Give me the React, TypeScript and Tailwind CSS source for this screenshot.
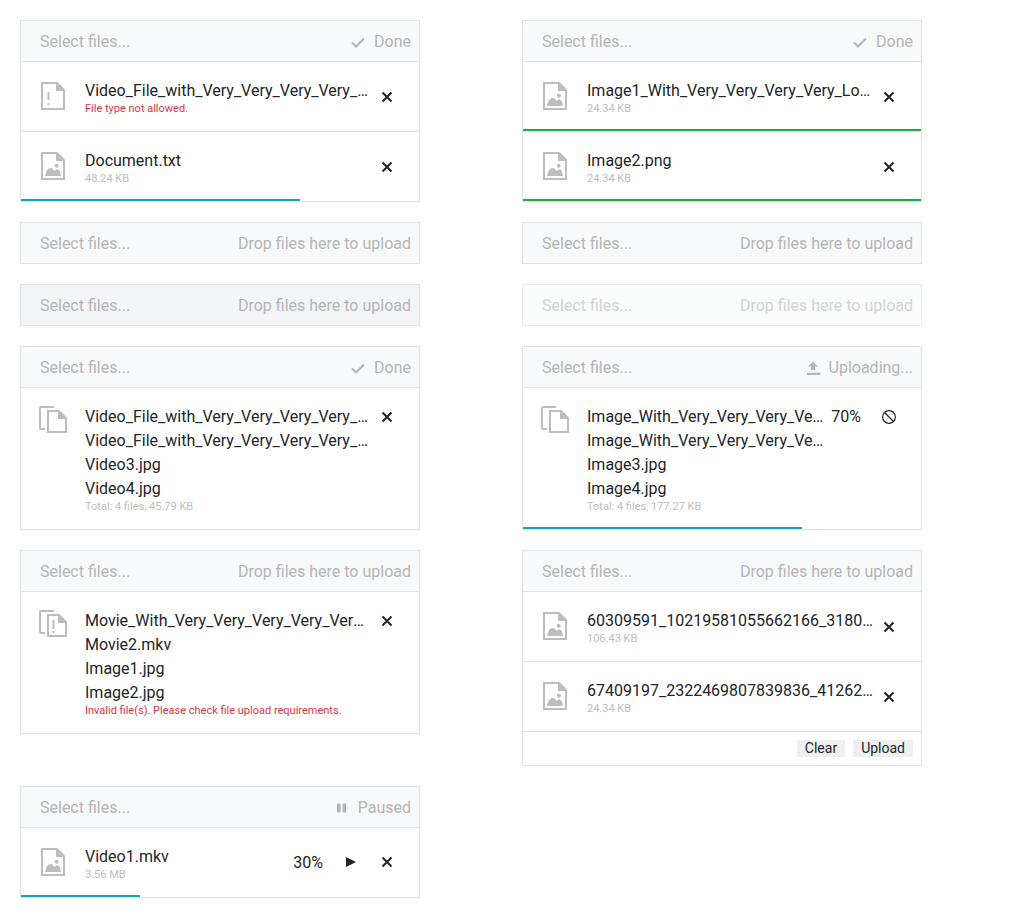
import React from 'react';

type Kind = 'blank' | 'warn' | 'image' | 'copy' | 'copyWarn';

const FileIcon = ({ kind }: { kind: Kind }) => {
  if (kind === 'copy' || kind === 'copyWarn') {
    return (
      <svg width="32" height="32" viewBox="0 0 32 32" className="shrink-0 text-[#bdbdbd]" fill="none" stroke="currentColor" strokeWidth="2">
        <path d="M17 3H4a1 1 0 0 0-1 1v20a1 1 0 0 0 1 1h4" />
        <path d="M11 7h11l7 7v14H11z" />
        <path d="M21 6l9 9h-9z" fill="currentColor" stroke="none" />
        {kind === 'copyWarn' && <path d="M16.500 12v9M16.500 23v2" />}
      </svg>
    );
  }
  return (
    <svg width="32" height="32" viewBox="0 0 32 32" className="shrink-0 text-[#bdbdbd]" fill="none" stroke="currentColor" strokeWidth="2">
      <path d="M5 2h15l7 7v19H5z" />
      <path d="M19 1l9 9h-9z" fill="currentColor" stroke="none" />
      {kind === 'warn' && <path d="M11.500 11v8M11.500 22v2" />}
      {kind === 'image' && (
        <g fill="currentColor" stroke="none">
          <circle cx="19.700" cy="14.700" r="2" />
          <path d="M8 25c1-5 3-8 5.500-8 2 0 3 1.500 4 3 .8-1 1.700-1.500 3-1.500 2 0 3 2.500 3.500 6.500z" />
        </g>
      )}
    </svg>
  );
};

const CheckIcon = () => (
  <svg width="16" height="16" viewBox="0 0 16 16" fill="none" stroke="currentColor" strokeWidth="2"><path d="M2 8.500l4 4L14 4.500" /></svg>
);
const UploadIcon = () => (
  <svg width="16" height="16" viewBox="0 0 16 16" fill="currentColor"><path d="M6 10h4V6.500h3L8 1.700 3 6.500h3zM2 12.700h13.300V15H2z" /></svg>
);
const PauseIcon = () => (
  <svg width="16" height="16" viewBox="0 0 16 16" fill="currentColor"><path d="M3 3.500h3.500v9H3zM8.500 3.500H12v9H8.500z" /></svg>
);
const CloseIcon = () => (
  <svg width="16" height="16" viewBox="0 0 16 16" fill="none" stroke="currentColor" strokeWidth="2"><path d="M3.500 3.500l9 9M12.500 3.500l-9 9" /></svg>
);
const PlayIcon = () => (
  <svg width="16" height="16" viewBox="0 0 16 16" fill="currentColor"><path d="M3 3l10 5-10 5z" /></svg>
);
const CancelIcon = () => (
  <svg width="16" height="16" viewBox="0 0 16 16" fill="none" stroke="currentColor" strokeWidth="1.200"><circle cx="8" cy="8" r="6.400" /><path d="M3.500 3.500l9 9" /></svg>
);

const ActionButton = ({ children }: { children: React.ReactNode }) => (
  <button className="w-8 h-8 flex items-center justify-center text-[#212529]">{children}</button>
);

type HeaderProps = {
  status: string;
  icon?: React.ReactNode;
  tone?: string;
};

const Header = ({ status, icon, tone = 'bg-[#f8f9fa]' }: HeaderProps) => (
  <div className={`h-10 flex items-center justify-between pl-[19px] pr-2 pt-px ${tone}`}>
    <span>Select files...</span>
    <span className="flex items-center gap-2">
      {icon}
      {status}
    </span>
  </div>
);

type RowProps = {
  kind: Kind;
  names: string[];
  sub: string;
  error?: boolean;
  percent?: string;
  actions: React.ReactNode;
  progress?: string;
  multi?: boolean;
};

const Row = ({ kind, names, sub, error, percent, actions, progress, multi }: RowProps) => (
  <li className={`relative flex px-4 border-b border-[#dee2e6] last:border-b-0 ${multi ? 'h-[141px] pt-4 items-start' : 'h-[70px] last:h-[69px] items-center'}`}>
    <FileIcon kind={kind} />
    <div className={`flex-1 min-w-0 ml-4 ${multi ? 'pt-px' : ''}`}>
      {names.map((name) => (
        <div key={name} className="truncate text-[#212529] leading-6">{name}</div>
      ))}
      <div className={`text-[11px] leading-3 ${error ? 'text-[#dc3545]' : 'text-[#bdbdbd]'}`}>{sub}</div>
    </div>
    <div className={`flex items-center ${multi ? '-mt-[3px]' : ''}`}>
      {percent && <span className="ml-2 mr-3 text-[#212529]">{percent}</span>}
      <div className={`flex items-center gap-1 ${percent && !multi ? '-mt-px' : ''}`}>{actions}</div>
    </div>
    {progress && <div className={`absolute left-0 bottom-0 h-[2px] ${progress}`} />}
  </li>
);

const Card = ({ header, children, dim }: { header: React.ReactNode; children?: React.ReactNode; dim?: boolean }) => (
  <div className={`border border-[#dee2e6] text-[#b5b5b5] ${dim ? 'opacity-60' : ''}`}>
    {header}
    {children && <ul className="border-t border-[#dee2e6]">{children}</ul>}
  </div>
);

const Close = () => (
  <ActionButton>
    <CloseIcon />
  </ActionButton>
);

const drop = 'Drop files here to upload';

export default function App() {
  return (
    <div className="grid grid-cols-[400px_400px] gap-x-[102px] gap-y-5 items-start p-5 text-base bg-white font-['Roboto',sans-serif]">
      <Card header={<Header status="Done" icon={<CheckIcon />} />}>
        <Row kind="warn" names={['Video_File_with_Very_Very_Very_Very_Very_Long_Name.mp4']} sub="File type not allowed." error actions={<Close />} />
        <Row kind="image" names={['Document.txt']} sub="48.24 KB" actions={<Close />} progress="w-[70%] bg-[#17a2b8]" />
      </Card>
      <Card header={<Header status="Done" icon={<CheckIcon />} />}>
        <Row kind="image" names={['Image1_With_Very_Very_Very_Very_Long_Name.png']} sub="24.34 KB" actions={<Close />} progress="w-full bg-[#28a745]" />
        <Row kind="image" names={['Image2.png']} sub="24.34 KB" actions={<Close />} progress="w-full bg-[#28a745]" />
      </Card>

      <Card header={<Header status={drop} />} />
      <Card header={<Header status={drop} />} />

      <Card header={<Header status={drop} tone="bg-[#f3f4f6]" />} />
      <Card header={<Header status={drop} />} dim />

      <Card header={<Header status="Done" icon={<CheckIcon />} />}>
        <Row
          multi
          kind="copy"
          names={['Video_File_with_Very_Very_Very_Very_Long_Name1.jpg', 'Video_File_with_Very_Very_Very_Very_Long_Name2.jpg', 'Video3.jpg', 'Video4.jpg']}
          sub="Total: 4 files, 45.79 KB"
          actions={<Close />}
        />
      </Card>
      <Card header={<Header status="Uploading..." icon={<UploadIcon />} />}>
        <Row
          multi
          kind="copy"
          names={['Image_With_Very_Very_Very_Very_Long_Name1.jpg', 'Image_With_Very_Very_Very_Very_Long_Name2.jpg', 'Image3.jpg', 'Image4.jpg']}
          sub="Total: 4 files, 177.27 KB"
          percent="70%"
          actions={<ActionButton><CancelIcon /></ActionButton>}
          progress="w-[70%] bg-[#17a2b8]"
        />
      </Card>

      <Card header={<Header status={drop} />}>
        <Row
          multi
          kind="copyWarn"
          names={['Movie_With_Very_Very_Very_Very_Very_Long_Name.mkv', 'Movie2.mkv', 'Image1.jpg', 'Image2.jpg']}
          sub="Invalid file(s). Please check file upload requirements."
          error
          actions={<Close />}
        />
      </Card>
      <Card header={<Header status={drop} />}>
        <Row kind="image" names={['60309591_10219581055662166_3180123456789012_n.jpg']} sub="106.43 KB" actions={<Close />} />
        <Row kind="image" names={['67409197_2322469807839836_4126212345678901_n.jpg']} sub="24.34 KB" actions={<Close />} />
        <li className="flex justify-end gap-2 p-2">
          <button className="h-[17px] px-2 bg-[#efefef] text-sm leading-[17px] text-[#212529]">Clear</button>
          <button className="h-[17px] px-2 bg-[#efefef] text-sm leading-[17px] text-[#212529]">Upload</button>
        </li>
      </Card>

      <Card header={<Header status="Paused" icon={<PauseIcon />} />}>
        <Row
          kind="image"
          names={['Video1.mkv']}
          sub="3.56 MB"
          percent="30%"
          actions={<><ActionButton><PlayIcon /></ActionButton><Close /></>}
          progress="w-[30%] bg-[#17a2b8]"
        />
      </Card>
    </div>
  );
}
